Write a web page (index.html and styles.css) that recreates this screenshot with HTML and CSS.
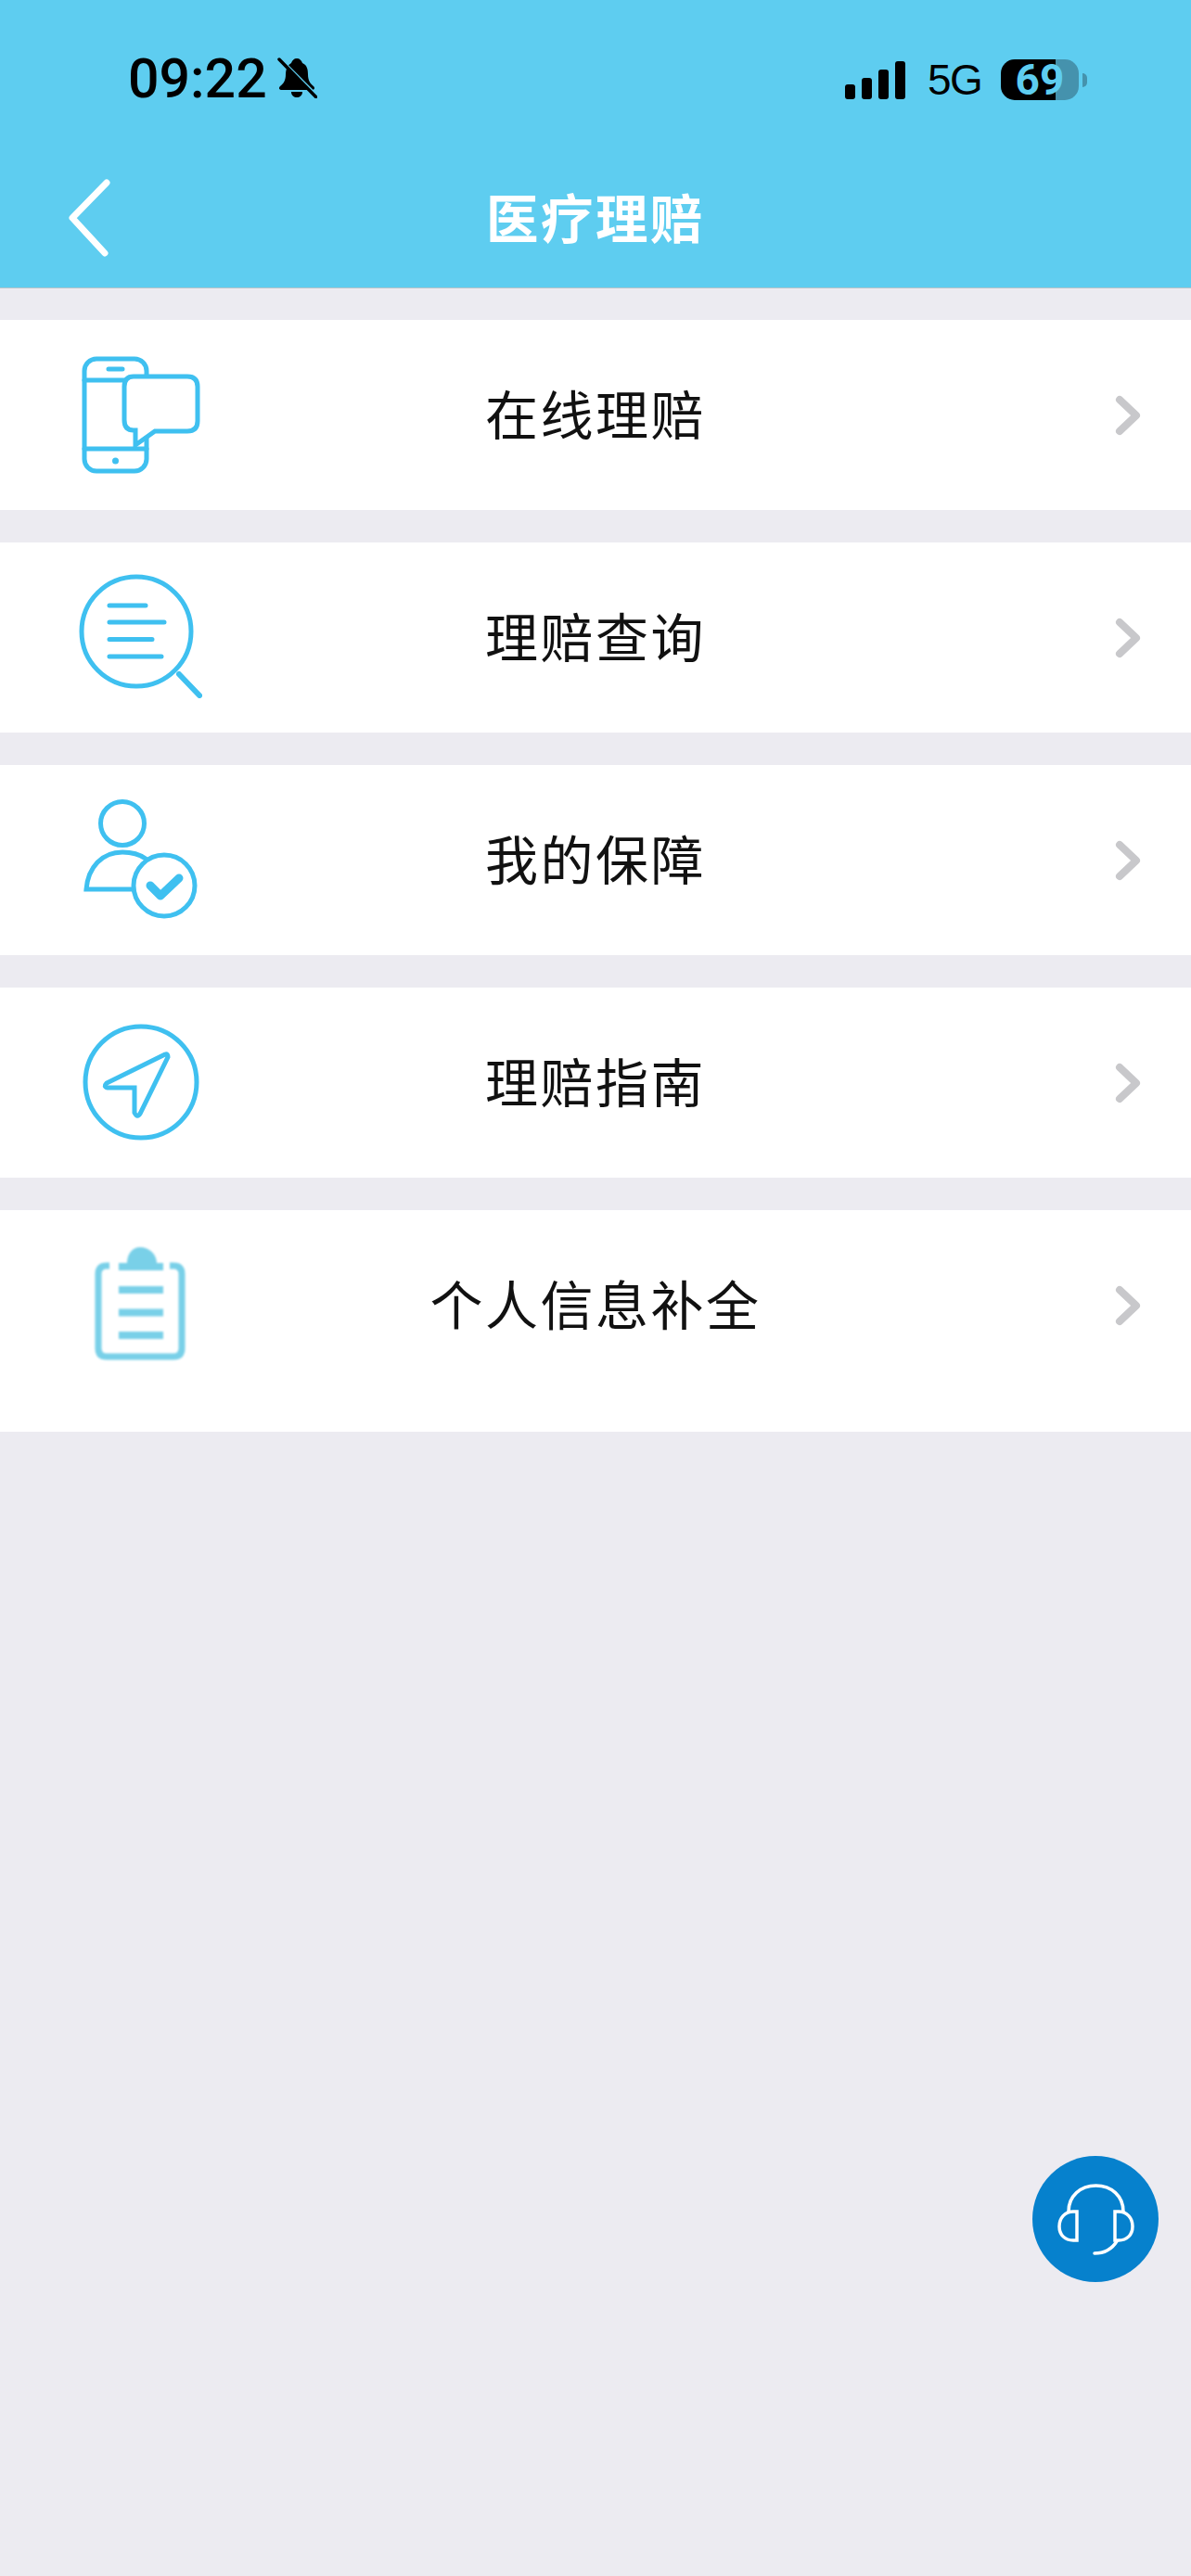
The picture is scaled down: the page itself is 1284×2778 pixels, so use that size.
FILE: index.html

```html
<!DOCTYPE html>
<html lang="zh-CN">
<head>
  <meta charset="UTF-8" />
  <title>医疗理赔</title>
  <link rel="stylesheet" href="styles.css">
</head>
<body>
  <header class="top">
    <div class="status">
      <span class="time">09:22</span>
      <svg class="bell" viewBox="0 0 44 44">
        <path d="M22 1c3 0 5 2 6 5 5 2 6 7 6 12 0 6 2 10 6 13 2 2 1 4-2 4H6c-3 0-4-2-2-4 4-3 6-7 6-13 0-5 2-10 6-12 1-3 3-5 6-5z" />
        <path d="M16 37h12c0 4-3 6-6 6s-6-2-6-6z" />
        <path class="bell-gap" d="M0 -2 L44 42" />
        <path class="bell-slash" d="M3 2 L43 43" />
      </svg>
      <div class="status-right">
        <div class="signal">
          <i class="bar1"></i><i class="bar2"></i><i class="bar3"></i><i class="bar4"></i>
        </div>
        <span class="net">5G</span>
        <div class="battery"><span>69</span></div>
        <i class="battery-nub"></i>
      </div>
    </div>
    <div class="nav">
      <svg class="back" viewBox="0 0 50 90"><path d="M43 5 L6 43 L41 81" /></svg>
      <h1 class="title">医疗理赔</h1>
    </div>
  </header>

  <main class="list">
    <a class="row">
      <svg class="icon" viewBox="0 0 200 170">
        <rect x="31" y="27" width="67" height="121" rx="13" />
        <path d="M31 50H80M31 124H98M57 38H72" />
        <circle class="solid" cx="64.5" cy="137" r="3.5" />
        <path class="bubble" d="M84 46H142Q153 46 153 57V94Q153 105 142 105H107L86 120V104H84Q74 104 74 93V57Q74 46 84 46Z" />
      </svg>
      <span class="label">在线理赔</span>
      <svg class="chevron" viewBox="0 0 30 44"><path d="M5 5 L23 22 L5 39" /></svg>
    </a>
    <a class="row">
      <svg class="icon" viewBox="0 0 200 170">
        <circle cx="87" cy="81" r="59" />
        <path d="M58 53H97M58 71H117M58 89.5H104M58 108H114" />
        <path class="thick" d="M133 127L155 150" />
      </svg>
      <span class="label">理赔查询</span>
      <svg class="chevron" viewBox="0 0 30 44"><path d="M5 5 L23 22 L5 39" /></svg>
    </a>
    <a class="row">
      <svg class="icon" viewBox="0 0 200 170">
        <circle cx="72" cy="48" r="23.5" />
        <path d="M83 119H33C35 95 50 79 72 79C82 79 90 81 97 86" />
        <circle cx="117" cy="115" r="33" />
        <path class="check" d="M102 115L113 126L133 107" />
      </svg>
      <span class="label">我的保障</span>
      <svg class="chevron" viewBox="0 0 30 44"><path d="M5 5 L23 22 L5 39" /></svg>
    </a>
    <a class="row">
      <svg class="icon icon-low" viewBox="0 0 200 170">
        <circle cx="92" cy="77" r="60" />
        <path d="M118 47L55 78Q51 82 56 83H85V110Q88 116 91 111L121 50Q121 46 118 47Z" />
      </svg>
      <span class="label">理赔指南</span>
      <svg class="chevron" viewBox="0 0 30 44"><path d="M5 5 L23 22 L5 39" /></svg>
    </a>
    <a class="row row-last">
      <svg class="icon icon-clip" viewBox="0 0 200 170">
        <path d="M48 45H45Q36 45 36 54V134Q36 143 45 143H117Q126 143 126 134V54Q126 45 117 45H113" />
        <path class="clip-solid" d="M58 42H67C67 32 73 25 81 25C90 25 99 32 99 42H106V50H58ZM58 67H106V75H58ZM58 91.500H106V99.500H58ZM58 116H106V124H58Z" />
      </svg>
      <span class="label">个人信息补全</span>
      <svg class="chevron" viewBox="0 0 30 44"><path d="M5 5 L23 22 L5 39" /></svg>
    </a>
  </main>

  <button class="fab">
    <svg viewBox="0 0 136 136">
      <path d="M39 60C39 43 52 32 68.500 32C85 32 98 43 98 60" />
      <path d="M48 60V91H44C35 91 29 85 29 76C29 67 35 60 44 60Z" />
      <path d="M89 60V91H93C102 91 108 85 108 76C108 67 102 60 93 60Z" />
      <path d="M91 92C86 100 78 105 67 105" />
    </svg>
  </button>
</body>
</html>
```

FILE: styles.css

```css
* {
  box-sizing: border-box;
}
body {
  margin: 0;
  min-height: 2778px;
  background: #ecebf1;
  font-family: "Noto Sans CJK SC", "Noto Sans", sans-serif;
  color: #111;
  position: relative;
}

/* header */
.top {
  height: 311px;
  background: #5ecdf0;
  border-bottom: 1px solid #b5c4ca;
}
.status {
  height: 172px;
  display: flex;
  align-items: center;
  padding: 0 112px 0 138px;
  color: #000;
}
.time {
  font-family: Roboto, sans-serif;
  font-weight: 500;
  font-size: 59px;
  margin-top: -3px;
}
.bell {
  width: 44px;
  height: 44px;
  margin: -4px 0 0 10px;
}
.bell-gap {
  fill: none;
  stroke: #5ecdf0;
  stroke-width: 4;
}
.bell-slash {
  fill: none;
  stroke: #000;
  stroke-width: 3.5;
  stroke-linecap: round;
}
.status-right {
  margin-left: auto;
  display: flex;
  align-items: center;
}
.signal {
  display: flex;
  align-items: flex-end;
  gap: 7px;
  height: 41px;
}
.signal i {
  display: block;
  width: 11px;
  background: #000;
  border-radius: 3px;
}
.bar1 { height: 16px; }
.bar2 { height: 23px; }
.bar3 { height: 32px; }
.bar4 { height: 41px; }
.net {
  font-family: "Liberation Sans", sans-serif;
  font-size: 46px;
  margin-left: 24px;
  width: 55px;
  letter-spacing: -1.5px;
}
.battery {
  width: 84px;
  height: 44px;
  margin-left: 24px;
  border-radius: 15px;
  background: linear-gradient(to right, #000 70.5%, #4592ad 70.5%);
  display: flex;
  align-items: center;
  justify-content: center;
  color: #5ecdf0;
  font-family: Roboto, sans-serif;
  font-weight: 700;
  font-size: 46px;
}
.battery-nub {
  display: block;
  width: 5px;
  height: 15px;
  margin-left: 4px;
  background: #4592ad;
  border-radius: 0 5px 5px 0;
}
.nav {
  height: 138px;
  display: flex;
  align-items: center;
  justify-content: center;
  position: relative;
  padding-bottom: 18px;
}
.back {
  position: absolute;
  left: 72px;
  top: 20px;
  width: 50px;
  height: 90px;
  fill: none;
  stroke: #fff;
  stroke-width: 7;
  stroke-linecap: round;
  stroke-linejoin: round;
}
.title {
  margin: 0;
  color: #fff;
  font-size: 56.500px;
  font-weight: 700;
  letter-spacing: 2.5px;
}

/* menu rows */
.list {
  padding-top: 34px;
  display: flex;
  flex-direction: column;
  gap: 35px;
}
.row {
  height: 205px;
  background: #fff;
  display: grid;
  grid-template-columns: 260px 1fr 260px;
  align-items: start;
}
.row-last {
  height: 239px;
}
.icon {
  width: 200px;
  height: 170px;
  margin: 15px 0 0 60px;
  fill: none;
  stroke: #3fc0f0;
  stroke-width: 5;
  stroke-linecap: round;
  filter: blur(0.6px);
}
.icon-low {
  margin-top: 25px;
}
.icon-clip {
  margin-left: 70px;
  stroke: #79d0e8;
  stroke-width: 7;
  stroke-linecap: butt;
  filter: blur(0.8px);
}
.clip-solid {
  fill: #79d0e8;
  stroke: none;
}
.solid {
  fill: #3fc0f0;
  stroke: none;
}
.bubble {
  fill: #fff;
}
.thick {
  stroke-width: 6;
}
.check {
  stroke-width: 9;
  stroke-linejoin: round;
}
.label {
  text-align: center;
  font-size: 57px;
  line-height: 199px;
  letter-spacing: 2.5px;
}
.chevron {
  justify-self: end;
  width: 30px;
  height: 44px;
  margin: 81px 52px 0 0;
  fill: none;
  stroke: #c8c8cb;
  stroke-width: 8;
  stroke-linecap: round;
  stroke-linejoin: round;
}

/* floating service button */
.fab {
  position: absolute;
  left: 1113px;
  top: 2325px;
  width: 136px;
  height: 136px;
  padding: 0;
  border: none;
  border-radius: 50%;
  background: #0681cd;
}
.fab svg {
  display: block;
  width: 136px;
  height: 136px;
  fill: none;
  stroke: #fff;
  stroke-width: 3.5;
  stroke-linecap: round;
}
```
